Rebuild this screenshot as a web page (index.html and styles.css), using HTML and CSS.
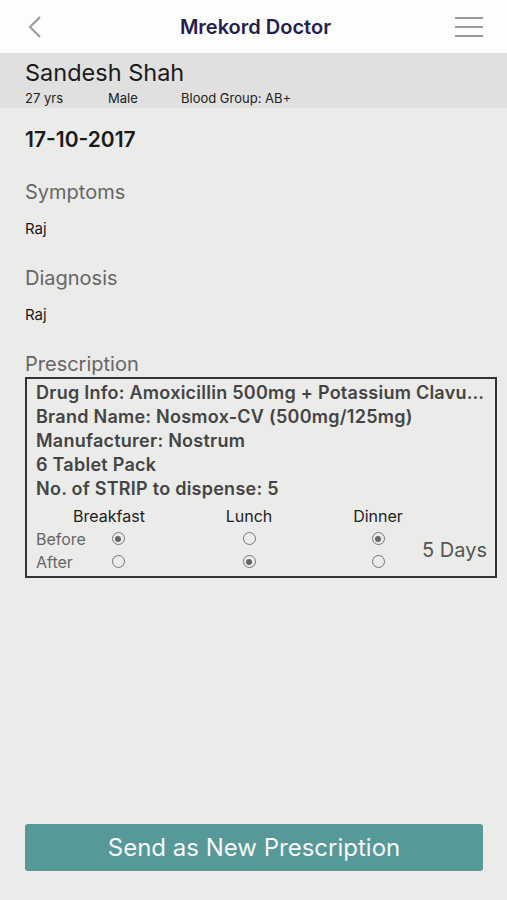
FILE: index.html
```html
<!DOCTYPE html>
<html lang="en">
<head>
<meta charset="UTF-8">
<meta name="viewport" content="width=device-width, initial-scale=1.0">
<title>Mrekord Doctor</title>
<link rel="stylesheet" href="styles.css">
</head>
<body>
<div class="topBar">
    <a class="backBtn" href="#">
        <svg width="14" height="24" viewBox="0 0 14 24"><path d="M12 2 L2 12 L12 22" fill="none" stroke="#9a9a9a" stroke-width="2"/></svg>
    </a>
    <h1>Mrekord Doctor</h1>
    <a class="menuBtn" href="#">
        <svg width="28" height="22" viewBox="0 0 28 22"><path d="M0 2 H28 M0 11 H28 M0 20 H28" stroke="#9a9a9a" stroke-width="2"/></svg>
    </a>
</div>

<div class="patientBar">
    <div class="patientName">Sandesh Shah</div>
    <div class="patientMeta">
        <span class="age">27 yrs</span>
        <span class="gender">Male</span>
        <span>Blood Group: AB+</span>
    </div>
</div>

<div class="content">
    <div class="visitDate">17-10-2017</div>

    <div class="fieldLabel">Symptoms</div>
    <div class="fieldValue">Raj</div>

    <div class="fieldLabel">Diagnosis</div>
    <div class="fieldValue">Raj</div>

    <div class="fieldLabel rxLabel">Prescription</div>
    <div class="rxBox">
        <div class="rxLine">Drug Info: Amoxicillin 500mg + Potassium Clavulanate 125mg</div>
        <div class="rxLine">Brand Name: Nosmox-CV (500mg/125mg)</div>
        <div class="rxLine">Manufacturer: Nostrum</div>
        <div class="rxLine">6 Tablet Pack</div>
        <div class="rxLine">No. of STRIP to dispense: 5</div>

        <div class="doseGrid">
            <span></span>
            <span class="mealHead breakfast">Breakfast</span>
            <span class="mealHead">Lunch</span>
            <span class="mealHead">Dinner</span>

            <span class="whenLabel">Before</span>
            <span class="radio on"></span>
            <span class="radio"></span>
            <span class="radio on"></span>

            <span class="whenLabel">After</span>
            <span class="radio"></span>
            <span class="radio on"></span>
            <span class="radio"></span>

            <span class="days">5 Days</span>
        </div>
    </div>
</div>

<button class="sendBtn">Send as New Prescription</button>
</body>
</html>
```

FILE: styles.css
```css
/* Prescription detail screen */
html, body {
    margin: 0;
    padding: 0;
}

body {
    width: 507px;
    height: 900px;
    background-color: #ebebea;
    font-family: Inter, "Liberation Sans", Arial, sans-serif;
    color: #1a1a1a;
    display: flex;
    flex-direction: column;
}

.topBar {
    height: 53px;
    background-color: #fdfdfd;
    display: flex;
    align-items: center;
    justify-content: space-between;
    padding: 0 24px 0 28px;
}

.topBar h1 {
    margin: 0;
    font-size: 20px;
    font-weight: 600;
    color: #24214f;
}

.backBtn, .menuBtn {
    display: flex;
    width: 30px;
}

.menuBtn {
    justify-content: flex-end;
}

.patientBar {
    background-color: #e0e0e0;
    padding: 6px 25px 4px;
    height: 45px;
}

.patientName {
    font-size: 23.5px;
    line-height: 28px;
}

.patientMeta {
    font-size: 13px;
    color: #222;
    margin-top: 3px;
    display: flex;
}

.patientMeta .age {
    width: 83px;
}

.patientMeta .gender {
    width: 73px;
}

.content {
    padding: 20px 10px 0 25px;
    flex: 1;
}

.visitDate {
    font-size: 21px;
    line-height: 24px;
    font-weight: 600;
    margin-bottom: 28px;
}

.fieldLabel {
    font-size: 20px;
    line-height: 24px;
    color: #666;
    margin-bottom: 16px;
}

.fieldValue {
    font-size: 15px;
    line-height: 18px;
    margin-bottom: 28px;
}

.rxLabel {
    margin-bottom: 1px;
}

.rxBox {
    border: 2px solid #333;
    padding: 2px 8px 3px 9px;
    width: 451px;
}

.rxLine {
    font-size: 18px;
    letter-spacing: 0.25px;
    font-weight: 600;
    color: #444;
    line-height: 24px;
    white-space: nowrap;
    overflow: hidden;
    text-overflow: ellipsis;
}

.doseGrid {
    display: grid;
    grid-template-columns: 46px 72px 190px 68px 1fr;
    grid-auto-rows: 23px;
    align-items: center;
    font-size: 16px;
    margin-top: 3px;
}

.mealHead {
    justify-self: center;
    color: #222;
}

.mealHead.breakfast {
    margin-right: 18px;
}

.whenLabel {
    grid-column: 1;
    color: #666;
}

.days {
    grid-row: 2 / span 2;
    grid-column: 5;
    justify-self: end;
    font-size: 20px;
    color: #555;
}

.radio {
    justify-self: center;
    width: 13px;
    height: 13px;
    border: 1px solid #777;
    border-radius: 50%;
    box-sizing: border-box;
    position: relative;
}

.radio.on::after {
    content: "";
    position: absolute;
    left: 2.5px;
    top: 2.5px;
    width: 6px;
    height: 6px;
    border-radius: 50%;
    background-color: #666;
}

.sendBtn {
    margin: 0 24px 29px 25px;
    height: 47px;
    border: none;
    border-radius: 3px;
    background-color: #579899;
    color: #f4f8f8;
    font-family: Inter, "Liberation Sans", Arial, sans-serif;
    font-size: 24px;
    cursor: pointer;
}
```
